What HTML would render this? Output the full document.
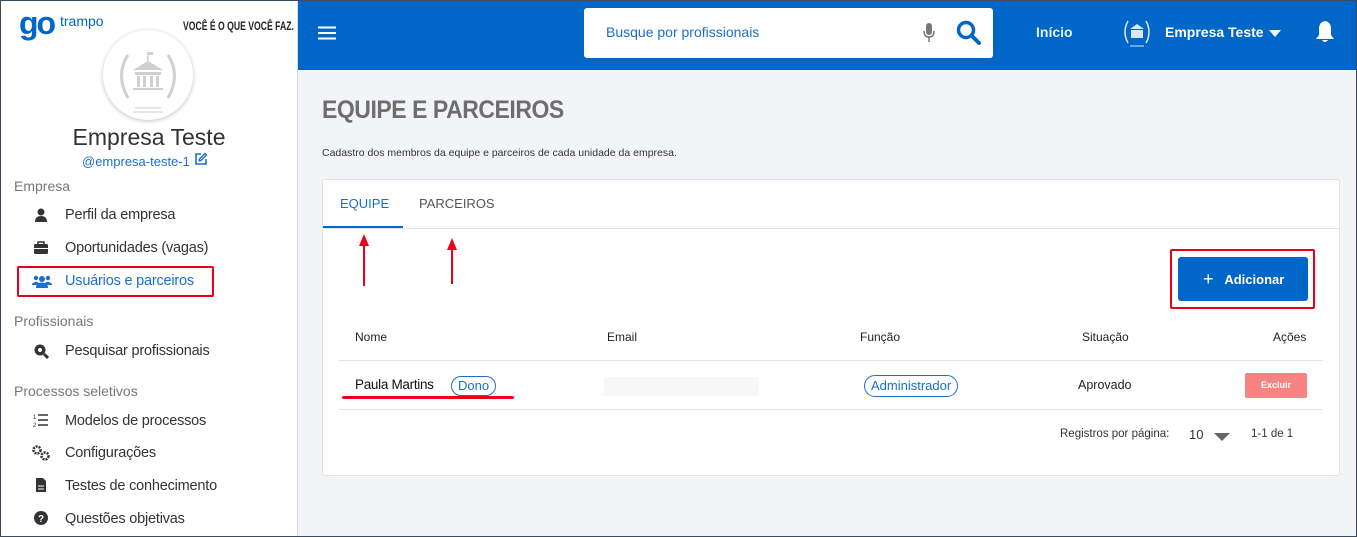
<!DOCTYPE html>
<html><head><meta charset="utf-8"><style>
*{margin:0;padding:0;box-sizing:border-box}
body{width:1357px;height:537px;overflow:hidden;font-family:"Liberation Sans",sans-serif;background:#f3f4f7;position:relative}
.a{position:absolute;white-space:nowrap}
#frame{position:absolute;left:0;top:0;width:1357px;height:537px;border:1px solid #3d4a5c;pointer-events:none;z-index:9}
#side{left:0;top:0;width:298px;height:537px;background:#fff;border-right:1px solid #d8dbe0}
#hdr{left:298px;top:0;width:1059px;height:70px;background:#0066c8}
.sec{font-size:14px;color:#777;left:14px}
.it{font-size:14.5px;color:#333;left:65px;letter-spacing:-0.2px}
.ic{left:33px;width:16px;height:16px}
</style></head><body>
<div id="frame"></div>
<div class="a" id="side">
  <div class="a" style="left:19px;top:6px;font-size:32px;font-weight:bold;color:#0066c8;letter-spacing:-2px;line-height:34px">go</div>
  <div class="a" style="left:60px;top:13px;font-size:14px;color:#0066c8">trampo</div>
  <div class="a" style="left:183px;top:19px;font-size:12px;font-weight:bold;color:#222;transform:scaleX(0.72);transform-origin:left">VOCÊ É O QUE VOCÊ FAZ.</div>
  <div class="a" style="left:103px;top:30px;width:90px;height:90px;border-radius:50%;background:#fff;box-shadow:0 1px 4px rgba(0,0,0,.25)">
    <svg width="90" height="90" viewBox="0 0 90 90"><g fill="none" stroke="#d0d0d0" stroke-width="3"><path d="M25 25 Q12 45 25 68"/><path d="M65 25 Q78 45 65 68"/></g><g fill="#d0d0d0"><path d="M30 40 L45 31 L60 40 Z"/><rect x="32" y="42" width="26" height="3"/><rect x="34" y="46" width="3" height="11"/><rect x="40" y="46" width="3" height="11"/><rect x="47" y="46" width="3" height="11"/><rect x="53" y="46" width="3" height="11"/><rect x="30" y="58" width="30" height="2"/><rect x="44" y="22" width="1.5" height="9"/><rect x="45" y="22" width="5" height="3"/></g><path d="M32 78 H58 M30 82 H60" stroke="#ddd" stroke-width="1.5"/></svg>
  </div>
  <div class="a" style="left:0;width:298px;top:124px;text-align:center;font-size:23px;color:#333">Empresa Teste</div>
  <div class="a" style="left:82px;top:154px;font-size:13px;color:#1a6fd0">@empresa-teste-1</div>
  <svg class="a" style="left:194px;top:152px" width="14" height="14" viewBox="0 0 14 14"><path d="M7 2H2V12H12V7" fill="none" stroke="#1a6fd0" stroke-width="1.6"/><path d="M11 1.5L12.5 3 7 8.5 5.2 8.8 5.5 7Z" fill="none" stroke="#1a6fd0" stroke-width="1.4"/></svg>
  <div class="a sec" style="top:178px">Empresa</div>
  <div class="a ic" style="top:207px"><svg width="16" height="16"><circle cx="8" cy="5" r="3.5" fill="#333"/><path d="M2 15 Q2 9 8 9 Q14 9 14 15Z" fill="#333"/></svg></div>
  <div class="a it" style="top:207px">Perfil da empresa</div>
  <div class="a ic" style="top:240px"><svg width="16" height="16"><rect x="1" y="4" width="14" height="10" rx="1.5" fill="#333"/><rect x="5" y="2" width="6" height="3" fill="none" stroke="#333" stroke-width="1.5"/><rect x="1" y="8" width="14" height="1" fill="#fff"/></svg></div>
  <div class="a it" style="top:240px">Oportunidades (vagas)</div>
  <div class="a" style="left:17px;top:266px;width:197px;height:31px;border:2px solid #e8001c;border-radius:2px"></div>
  <div class="a ic" style="top:273px;left:32px;width:20px"><svg width="20" height="16"><circle cx="4" cy="5" r="2.2" fill="#1a6fd0"/><circle cx="16" cy="5" r="2.2" fill="#1a6fd0"/><circle cx="10" cy="6" r="3" fill="#1a6fd0"/><path d="M0 11 Q4 7 7 10 L7 12 H0Z M13 10 Q16 7 20 11 V12 H13Z M4 15 Q4 9.5 10 9.5 Q16 9.5 16 15Z" fill="#1a6fd0"/></svg></div>
  <div class="a it" style="top:273px;color:#1a6fd0">Usuários e parceiros</div>
  <div class="a sec" style="top:313px">Profissionais</div>
  <div class="a ic" style="top:343px"><svg width="16" height="16"><circle cx="7" cy="7" r="5.5" fill="#333"/><circle cx="7" cy="7" r="2" fill="#fff"/><path d="M11 11 L15 15" stroke="#333" stroke-width="3"/></svg></div>
  <div class="a it" style="top:343px">Pesquisar profissionais</div>
  <div class="a sec" style="top:383px">Processos seletivos</div>
  <div class="a ic" style="top:412px"><svg width="16" height="16"><text x="0" y="7" font-size="6" fill="#333" font-family="Liberation Sans">1</text><text x="0" y="15" font-size="6" fill="#333" font-family="Liberation Sans">2</text><path d="M5 3H15M5 8H15M5 13H15" stroke="#333" stroke-width="1.6"/></svg></div>
  <div class="a it" style="top:413px">Modelos de processos</div>
  <div class="a ic" style="top:445px;left:31px;width:20px"><svg width="20" height="16"><circle cx="6" cy="5" r="3.5" fill="none" stroke="#333" stroke-width="2.5" stroke-dasharray="2 1"/><circle cx="14" cy="11" r="3.5" fill="none" stroke="#333" stroke-width="2.5" stroke-dasharray="2 1"/></svg></div>
  <div class="a it" style="top:445px">Configurações</div>
  <div class="a ic" style="top:477px"><svg width="16" height="16"><path d="M3 1H10L13 4V15H3Z" fill="#333"/><path d="M5 9H11M5 12H11" stroke="#fff" stroke-width="1"/></svg></div>
  <div class="a it" style="top:478px">Testes de conhecimento</div>
  <div class="a ic" style="top:510px"><svg width="16" height="16"><circle cx="8" cy="8" r="7" fill="#333"/><text x="8" y="12" text-anchor="middle" font-size="10" font-weight="bold" fill="#fff" font-family="Liberation Sans">?</text></svg></div>
  <div class="a it" style="top:511px">Questões objetivas</div>
</div>
<div class="a" id="hdr">
  <svg class="a" style="left:20px;top:26px" width="18" height="14"><path d="M0 1.5H18M0 7H18M0 12.5H18" stroke="#fff" stroke-width="2"/></svg>
  <div class="a" style="left:286px;top:8px;width:409px;height:50px;background:#fff;border-radius:3px">
    <div class="a" style="left:22px;top:16px;font-size:14px;color:#1a6fd0">Busque por profissionais</div>
    <svg class="a" style="left:338px;top:14px" width="14" height="22"><rect x="4" y="1" width="6" height="12" rx="3" fill="#777"/><path d="M2 9 Q2 15 7 15 Q12 15 12 9 M7 15V20" fill="none" stroke="#777" stroke-width="1.5"/></svg>
    <svg class="a" style="left:372px;top:12px" width="26" height="26"><circle cx="10" cy="10" r="7.5" fill="none" stroke="#0066c8" stroke-width="3.5"/><path d="M15.5 15.5L23 23" stroke="#0066c8" stroke-width="4" stroke-linecap="round"/></svg>
  </div>
  <div class="a" style="left:738px;top:24px;font-size:14px;font-weight:bold;color:#e6eefa">Início</div>
  <div class="a" style="left:823px;top:15px;width:32px;height:34px">
    <svg width="32" height="34"><g fill="none" stroke="#dce6f5" stroke-width="1.5"><path d="M7 6 Q1 17 7 28"/><path d="M25 6 Q31 17 25 28"/></g><g fill="#dce6f5"><path d="M9 14L16 9L23 14Z"/><rect x="10" y="15" width="12" height="8"/></g><path d="M9 31H23" stroke="#dce6f5"/></svg>
  </div>
  <div class="a" style="left:867px;top:24px;font-size:14px;font-weight:bold;color:#fff">Empresa Teste</div>
  <div class="a" style="left:971px;top:30px;width:0;height:0;border-left:6px solid transparent;border-right:6px solid transparent;border-top:7px solid #fff"></div>
  <svg class="a" style="left:1017px;top:20px" width="20" height="24"><path d="M10 1 Q4 2 4 9 V15 L1 19 H19 L16 15 V9 Q16 2 10 1Z M7 20 Q10 24 13 20Z" fill="#fff"/></svg>
</div>
<div class="a" style="left:322px;top:96px;font-size:25px;font-weight:bold;color:#6e6e6e;letter-spacing:-0.5px;transform:scaleX(0.92);transform-origin:left">EQUIPE E PARCEIROS</div>
<div class="a" style="left:322px;top:147px;font-size:10.5px;color:#333">Cadastro dos membros da equipe e parceiros de cada unidade da empresa.</div>
<div class="a" style="left:322px;top:179px;width:1018px;height:297px;background:#fff;border:1px solid #e0e2e6;border-radius:3px">
  <div class="a" style="left:17px;top:16px;font-size:13px;color:#1a6fd0">EQUIPE</div>
  <div class="a" style="left:96px;top:16px;font-size:13px;color:#555">PARCEIROS</div>
  <div class="a" style="left:0;top:46px;width:80px;height:2px;background:#0066c8"></div>
  <div class="a" style="left:0;top:48px;width:1016px;height:1px;background:#e2e4e8"></div>
  <svg class="a" style="left:30px;top:52px" width="120" height="56"><path d="M11 54V6" stroke="#e8001c" stroke-width="2"/><path d="M6 14L11 2L16 14Z" fill="#e8001c"/><path d="M99 52V10" stroke="#e8001c" stroke-width="2"/><path d="M94 18L99 6L104 18Z" fill="#e8001c"/></svg>
  <div class="a" style="left:847px;top:69px;width:145px;height:60px;border:2px solid #e8001c;border-radius:2px"></div>
  <div class="a" style="left:855px;top:77px;width:130px;height:44px;background:#0066c8;border-radius:3px;color:#fff;font-size:13px;font-weight:bold;line-height:44px;padding-left:25px"><span style="font-size:18px;font-weight:normal;vertical-align:-1px">+</span>&nbsp;&nbsp;&nbsp;Adicionar</div>
  <div class="a" style="left:32px;top:150px;font-size:12px;color:#222">Nome</div>
  <div class="a" style="left:284px;top:150px;font-size:12px;color:#222">Email</div>
  <div class="a" style="left:537px;top:150px;font-size:12px;color:#222">Função</div>
  <div class="a" style="left:759px;top:150px;font-size:12px;color:#222">Situação</div>
  <div class="a" style="left:950px;top:150px;font-size:12px;color:#222">Ações</div>
  <div class="a" style="left:16px;top:180px;width:984px;height:1px;background:#e2e4e8"></div>
  <div class="a" style="left:32px;top:197px;font-size:13.5px;color:#111;letter-spacing:-0.3px">Paula Martins</div>
  <div class="a" style="left:128px;top:196px;height:20px;padding:0 6px;border:1px solid #1a6fd0;border-radius:10px;font-size:13px;color:#1a6fd0;line-height:18px">Dono</div>
  <div class="a" style="left:19px;top:216px;width:172px;height:3px;background:#e8001c;border-radius:2px"></div>
  <div class="a" style="left:281px;top:197px;width:155px;height:19px;background:#f7f7f7"></div>
  <div class="a" style="left:541px;top:195px;height:22px;padding:0 6px;border:1px solid #1a6fd0;border-radius:11px;font-size:13px;color:#1a6fd0;line-height:20px">Administrador</div>
  <div class="a" style="left:755px;top:198px;font-size:12.5px;color:#222">Aprovado</div>
  <div class="a" style="left:922px;top:193px;width:62px;height:25px;background:#f78383;border-radius:2px;color:#fff;font-size:9px;font-weight:bold;text-align:center;line-height:25px">Excluir</div>
  <div class="a" style="left:16px;top:229px;width:984px;height:1px;background:#e2e4e8"></div>
  <div class="a" style="left:737px;top:248px;font-size:11.5px;color:#333">Registros por página:</div>
  <div class="a" style="left:866px;top:247px;font-size:13px;color:#333">10</div>
  <div class="a" style="left:891px;top:253px;width:0;height:0;border-left:8px solid transparent;border-right:8px solid transparent;border-top:8px solid #666"></div>
  <div class="a" style="left:928px;top:248px;font-size:11.5px;color:#333">1-1 de 1</div>
</div>
</body></html>
